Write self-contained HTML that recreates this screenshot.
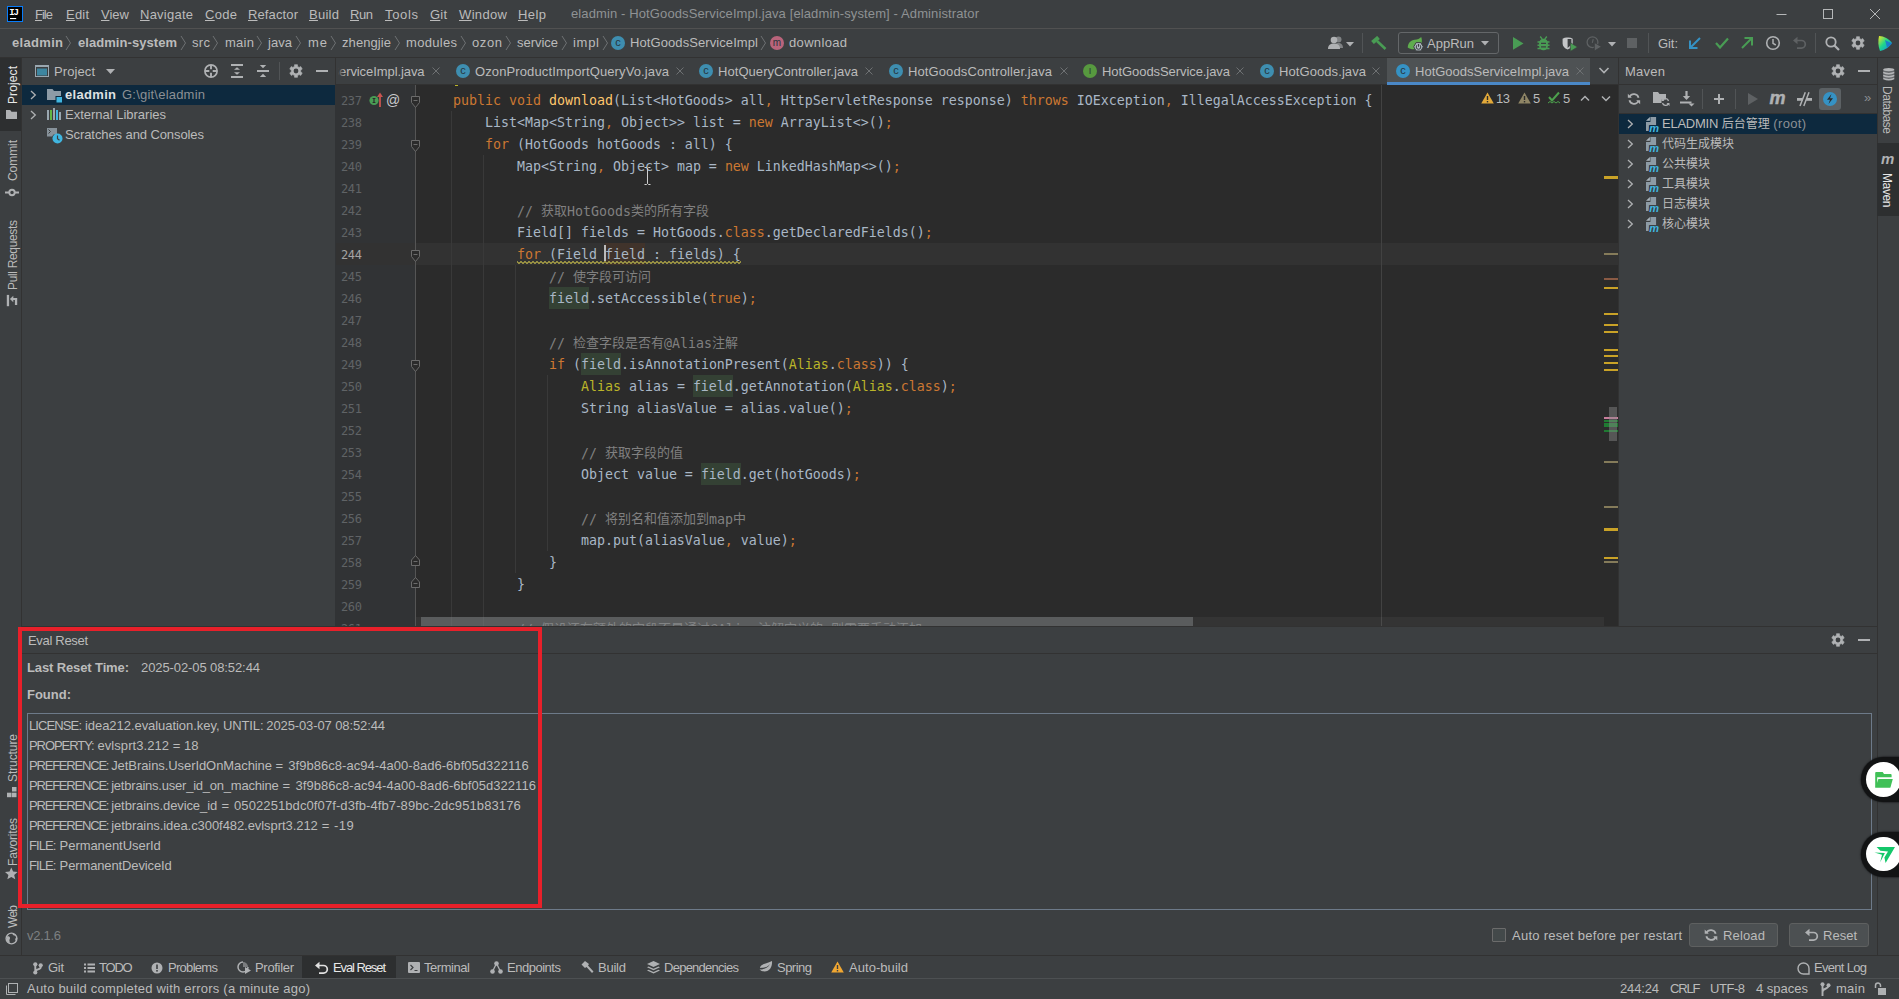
<!DOCTYPE html>
<html lang="en"><head><meta charset="utf-8"><title>eladmin - HotGoodsServiceImpl.java</title>
<style>
html,body{margin:0;padding:0;background:#3c3f41;}
body{width:1899px;height:999px;overflow:hidden;}
#root{position:relative;width:1899px;height:999px;overflow:hidden;background:#3c3f41;font-family:"Liberation Sans","Noto Sans CJK SC",sans-serif;font-size:13px;color:#bbbbbb;}
#root div,#root svg,#root span.t{position:absolute;}
span.t{white-space:pre;display:block;}
.b{font-weight:bold;}
.dim{color:#8a8d8f;}
.mono{font-family:"DejaVu Sans Mono","Noto Sans CJK SC",monospace;}
.code{font-family:"DejaVu Sans Mono","Noto Sans CJK SC",monospace;font-size:13.29px;color:#a9b7c6;}
.code i{font-style:normal;font-family:"Noto Sans CJK SC",sans-serif;font-size:13px;position:relative;top:-1px;}
.k{color:#cc7832;}.m{color:#ffc66d;}.c{color:#808080;}.a{color:#bbb529;}
.hr{background:#344134;padding:4px 0 3px;}.hw{background:#40332b;padding:4px 0 3px;}
.wv{}
.ln{font-family:"DejaVu Sans Mono",monospace;font-size:12px;color:#606366;letter-spacing:-0.4px;}
.vl{transform-origin:0 0;transform:rotate(-90deg);font-size:12px;}
.vr{transform-origin:0 0;transform:rotate(90deg);font-size:12px;}
.mv i{font-style:normal;font-size:12px;}
.mv em{font-style:normal;color:#8c9094;letter-spacing:.35px;}

</style></head><body>
<div id="root">
<div style="left:0px;top:0px;width:1899px;height:28px;background:#3c3f41;"></div>
<div style="left:0px;top:28px;width:1899px;height:1px;background:#515151;"></div>
<div style="left:0px;top:29px;width:1899px;height:28px;background:#3c3f41;"></div>
<div style="left:0px;top:57px;width:1899px;height:1px;background:#323232;"></div>
<div style="left:0px;top:58px;width:22px;height:898px;background:#3c3f41;"></div>
<div style="left:21px;top:58px;width:1px;height:898px;background:#323232;"></div>
<div style="left:0px;top:58px;width:21px;height:73px;background:#2d2f30;"></div>
<div style="left:22px;top:58px;width:313px;height:569px;background:#3c3f41;"></div>
<div style="left:22px;top:85px;width:313px;height:20px;background:#0d293e;"></div>
<div style="left:335px;top:58px;width:1284px;height:27px;background:#3c3f41;"></div>
<div style="left:335px;top:84px;width:1284px;height:1px;background:#323232;"></div>
<div style="left:335px;top:85px;width:1284px;height:541px;background:#2b2b2b;"></div>
<div style="left:335px;top:85px;width:80px;height:541px;background:#313335;"></div>
<div style="left:1618px;top:58px;width:1px;height:569px;background:#323232;"></div>
<div style="left:1619px;top:58px;width:258px;height:569px;background:#3c3f41;"></div>
<div style="left:1619px;top:84px;width:258px;height:1px;background:#323232;"></div>
<div style="left:1619px;top:114px;width:258px;height:20px;background:#0d293e;"></div>
<div style="left:1877px;top:58px;width:1px;height:898px;background:#323232;"></div>
<div style="left:1878px;top:58px;width:21px;height:898px;background:#3c3f41;"></div>
<div style="left:1877px;top:143px;width:22px;height:73px;background:#2d2f30;"></div>
<div style="left:22px;top:626px;width:1855px;height:1px;background:#323232;"></div>
<div style="left:22px;top:627px;width:1855px;height:329px;background:#3c3f41;"></div>
<div style="left:22px;top:653px;width:1855px;height:1px;background:#323232;"></div>
<div style="left:0px;top:955px;width:1899px;height:1px;background:#323232;"></div>
<div style="left:0px;top:956px;width:1899px;height:22px;background:#3c3f41;"></div>
<div style="left:0px;top:978px;width:1899px;height:1px;background:#4d5052;"></div>
<div style="left:0px;top:979px;width:1899px;height:20px;background:#3c3f41;"></div>
<svg style="left:7px;top:6px;" width="16" height="16" viewBox="0 0 16 16"><rect x="0.5" y="0.5" width="15" height="15" fill="#000" stroke="#087cfa" stroke-width="1"/><text x="2.200" y="8.900" font-family="Liberation Mono,monospace" font-weight="bold" font-size="9" letter-spacing="-1" fill="#fff">IJ</text><rect x="3" y="12" width="6.200" height="1.100" fill="#fff"/></svg>
<span class="t " style="left:35px;top:5.0px;line-height:20px;letter-spacing:-0.990px;text-underline-offset:1px;"><u>F</u>ile</span>
<span class="t " style="left:66px;top:5.0px;line-height:20px;letter-spacing:0.198px;text-underline-offset:1px;"><u>E</u>dit</span>
<span class="t " style="left:101px;top:5.0px;line-height:20px;letter-spacing:0.016px;text-underline-offset:1px;"><u>V</u>iew</span>
<span class="t " style="left:140px;top:5.0px;line-height:20px;letter-spacing:0.241px;text-underline-offset:1px;"><u>N</u>avigate</span>
<span class="t " style="left:205px;top:5.0px;line-height:20px;letter-spacing:0.302px;text-underline-offset:1px;"><u>C</u>ode</span>
<span class="t " style="left:248px;top:5.0px;line-height:20px;letter-spacing:0.123px;text-underline-offset:1px;"><u>R</u>efactor</span>
<span class="t " style="left:309px;top:5.0px;line-height:20px;letter-spacing:0.270px;text-underline-offset:1px;"><u>B</u>uild</span>
<span class="t " style="left:350px;top:5.0px;line-height:20px;letter-spacing:-0.430px;text-underline-offset:1px;"><u>R</u>un</span>
<span class="t " style="left:385px;top:5.0px;line-height:20px;letter-spacing:0.660px;text-underline-offset:1px;"><u>T</u>ools</span>
<span class="t " style="left:430px;top:5.0px;line-height:20px;letter-spacing:0.188px;text-underline-offset:1px;"><u>G</u>it</span>
<span class="t " style="left:459px;top:5.0px;line-height:20px;letter-spacing:0.350px;text-underline-offset:1px;"><u>W</u>indow</span>
<span class="t " style="left:518px;top:5.0px;line-height:20px;letter-spacing:0.417px;text-underline-offset:1px;"><u>H</u>elp</span>
<span class="t " style="left:571px;top:4.0px;line-height:20px;letter-spacing:0.117px;color:#8f9294;">eladmin - HotGoodsServiceImpl.java [eladmin-system] - Administrator</span>
<svg style="left:1776px;top:8px;" width="12" height="12" viewBox="0 0 12 12"><path d="M0.5 6.5h10" stroke="#b5b7b8" stroke-width="1" fill="none"/></svg>
<svg style="left:1822px;top:8px;" width="12" height="12" viewBox="0 0 12 12"><rect x="1.5" y="1.5" width="9" height="9" stroke="#b5b7b8" stroke-width="1" fill="none"/></svg>
<svg style="left:1869px;top:8px;" width="12" height="12" viewBox="0 0 12 12"><path d="M1 1l10 10M11 1L1 11" stroke="#b5b7b8" stroke-width="1" fill="none"/></svg>
<span class="t b" style="left:12px;top:33.0px;line-height:20px;letter-spacing:0.312px;">eladmin</span>
<span class="t b" style="left:78px;top:33.0px;line-height:20px;letter-spacing:0.056px;">eladmin-system</span>
<span class="t " style="left:192px;top:33.0px;line-height:20px;letter-spacing:0.328px;">src</span>
<span class="t " style="left:225px;top:33.0px;line-height:20px;letter-spacing:0.271px;">main</span>
<span class="t " style="left:268px;top:33.0px;line-height:20px;letter-spacing:0.047px;">java</span>
<span class="t " style="left:308px;top:33.0px;line-height:20px;letter-spacing:0.938px;">me</span>
<span class="t " style="left:342px;top:33.0px;line-height:20px;letter-spacing:0.080px;">zhengjie</span>
<span class="t " style="left:406px;top:33.0px;line-height:20px;letter-spacing:0.310px;">modules</span>
<span class="t " style="left:472px;top:33.0px;line-height:20px;letter-spacing:0.599px;">ozon</span>
<span class="t " style="left:517px;top:33.0px;line-height:20px;letter-spacing:-0.031px;">service</span>
<span class="t " style="left:573px;top:33.0px;line-height:20px;letter-spacing:0.719px;">impl</span>
<svg style="left:64.5px;top:35px;" width="7" height="16" viewBox="0 0 7 16"><path d="M1 1l4.5 7L1 15" stroke="#6e7173" stroke-width="1" fill="none"/></svg>
<svg style="left:179.5px;top:35px;" width="7" height="16" viewBox="0 0 7 16"><path d="M1 1l4.5 7L1 15" stroke="#6e7173" stroke-width="1" fill="none"/></svg>
<svg style="left:211.5px;top:35px;" width="7" height="16" viewBox="0 0 7 16"><path d="M1 1l4.5 7L1 15" stroke="#6e7173" stroke-width="1" fill="none"/></svg>
<svg style="left:255.5px;top:35px;" width="7" height="16" viewBox="0 0 7 16"><path d="M1 1l4.5 7L1 15" stroke="#6e7173" stroke-width="1" fill="none"/></svg>
<svg style="left:294.5px;top:35px;" width="7" height="16" viewBox="0 0 7 16"><path d="M1 1l4.5 7L1 15" stroke="#6e7173" stroke-width="1" fill="none"/></svg>
<svg style="left:329.5px;top:35px;" width="7" height="16" viewBox="0 0 7 16"><path d="M1 1l4.5 7L1 15" stroke="#6e7173" stroke-width="1" fill="none"/></svg>
<svg style="left:393.5px;top:35px;" width="7" height="16" viewBox="0 0 7 16"><path d="M1 1l4.5 7L1 15" stroke="#6e7173" stroke-width="1" fill="none"/></svg>
<svg style="left:459.5px;top:35px;" width="7" height="16" viewBox="0 0 7 16"><path d="M1 1l4.5 7L1 15" stroke="#6e7173" stroke-width="1" fill="none"/></svg>
<svg style="left:504.5px;top:35px;" width="7" height="16" viewBox="0 0 7 16"><path d="M1 1l4.5 7L1 15" stroke="#6e7173" stroke-width="1" fill="none"/></svg>
<svg style="left:560.5px;top:35px;" width="7" height="16" viewBox="0 0 7 16"><path d="M1 1l4.5 7L1 15" stroke="#6e7173" stroke-width="1" fill="none"/></svg>
<svg style="left:601.5px;top:35px;" width="7" height="16" viewBox="0 0 7 16"><path d="M1 1l4.5 7L1 15" stroke="#6e7173" stroke-width="1" fill="none"/></svg>
<svg style="left:759.5px;top:35px;" width="7" height="16" viewBox="0 0 7 16"><path d="M1 1l4.5 7L1 15" stroke="#6e7173" stroke-width="1" fill="none"/></svg>
<svg style="left:610px;top:35px;" width="16" height="16" viewBox="0 0 16 16"><circle cx="8" cy="8" r="7" fill="#3e8eb0"/><text x="8" y="10.9" text-anchor="middle" font-family="Liberation Sans,sans-serif" font-size="11" fill="#28343c">c</text></svg>
<span class="t " style="left:630px;top:33.0px;line-height:20px;letter-spacing:0.086px;">HotGoodsServiceImpl</span>
<svg style="left:769px;top:35px;" width="16" height="16" viewBox="0 0 16 16"><circle cx="8" cy="8" r="7" fill="#b9647b"/><text x="8" y="11.2" text-anchor="middle" font-family="Liberation Sans,sans-serif" font-size="10" fill="#28343c">m</text></svg>
<span class="t " style="left:789px;top:33.0px;line-height:20px;letter-spacing:0.335px;">download</span>
<span class="t vl" style="left:4.5px;top:104px;line-height:16px;font-size:12px;color:#e8e8e8;letter-spacing:0.107px;">Project</span>
<svg style="left:6px;top:110px;" width="11" height="9" viewBox="0 0 11 9"><path d="M0 0h4.200l1.300 1.800H11V9H0z" fill="#afb1b3"/></svg>
<span class="t vl" style="left:4.5px;top:181px;line-height:16px;font-size:12px;color:#bbbbbb;letter-spacing:-0.069px;">Commit</span>
<svg style="left:5px;top:186.5px;" width="14" height="11" viewBox="0 0 14 11"><circle cx="7" cy="5.500" r="2.700" stroke="#afb1b3" stroke-width="1.900" fill="none"/><path d="M0 5.500h4.300M9.700 5.500H14" stroke="#afb1b3" stroke-width="1.900"/></svg>
<span class="t vl" style="left:4.5px;top:289.5px;line-height:16px;font-size:12px;color:#bbbbbb;letter-spacing:-0.337px;">Pull Requests</span>
<svg style="left:6px;top:294px;" width="12" height="13" viewBox="0 0 12 13"><rect x=".8" y=".9" width="2.300" height="11.300" fill="#afb1b3"/><path d="M3.900 5L7.300 1.800v6.500z" fill="#afb1b3"/><path d="M7 4h4.200v7.100H8.900V6.100H7z" fill="#afb1b3"/></svg>
<span class="t vl" style="left:4.5px;top:782px;line-height:16px;font-size:12px;color:#bbbbbb;letter-spacing:-0.086px;">Structure</span>
<svg style="left:7px;top:787px;" width="10" height="11" viewBox="0 0 10 11"><rect x="5" y="0" width="4.500" height="4.500" fill="#afb1b3"/><rect x="0" y="5.700" width="4.500" height="4.500" fill="#afb1b3"/><rect x="5" y="5.700" width="4.500" height="4.500" fill="#afb1b3"/></svg>
<span class="t vl" style="left:4.5px;top:866px;line-height:16px;font-size:12px;color:#bbbbbb;letter-spacing:-0.170px;">Favorites</span>
<svg style="left:5px;top:866.5px;" width="13" height="13" viewBox="0 0 13 13"><path transform="scale(.9)" d="M7 0.5l2 4.6 5 .4-3.8 3.3 1.2 4.9L7 11.1 2.6 13.7l1.2-4.9L0 5.5l5-.4z" fill="#afb1b3"/></svg>
<span class="t vl" style="left:4.5px;top:928px;line-height:16px;font-size:12px;color:#bbbbbb;letter-spacing:-0.734px;">Web</span>
<svg style="left:5px;top:932px;" width="13" height="13" viewBox="0 0 13 13"><circle cx="6.500" cy="6.500" r="5.400" fill="none" stroke="#afb1b3" stroke-width="1.400"/><path d="M2 4.500c1.500-.5 3 0 3 1.500s-1 1.500-.5 3 0 2-.5 2C2 10 1 7 2 4.500zM7.500 1.500c0 1.500 1 2 2.500 2s1.500 2 .5 3 .5 2 .5 3c2-2 2-6-3.500-8z" fill="#afb1b3"/></svg>
<svg style="left:1882.5px;top:68px;" width="12" height="13" viewBox="0 0 12 13"><path d="M.2 1.600h11.100v8.500Q5.750 13 .2 10.100z" fill="#686b6e"/><ellipse cx="5.750" cy="1.600" rx="5.550" ry="1.600" fill="#b4b6b8"/><path d="M.2 3.8Q5.750 6.0 11.300 3.8v1.500Q5.750 7.7 .2 5.3z" fill="#b4b6b8"/><path d="M.2 6.8Q5.750 9.0 11.300 6.8v1.500Q5.750 10.7 .2 8.3z" fill="#b4b6b8"/><path d="M.2 9.8Q5.750 12.0 11.300 9.8v1.500Q5.750 13.7 .2 11.3z" fill="#b4b6b8"/></svg>
<span class="t vr" style="left:1895px;top:85.5px;line-height:16px;font-size:12px;color:#bbbbbb;letter-spacing:-0.482px;">Database</span>
<svg style="left:1881px;top:154px;" width="14" height="11" viewBox="0 0 14 11"><text x="0" y="10" font-family="Liberation Sans,sans-serif" font-style="italic" font-weight="bold" font-size="15" fill="#afb1b3">m</text></svg>
<span class="t vr" style="left:1895px;top:172.5px;line-height:16px;font-size:12px;color:#e8e8e8;letter-spacing:-0.383px;">Maven</span>
<svg style="left:35px;top:65px;" width="14" height="12" viewBox="0 0 14 12"><rect x="0.5" y="0.5" width="13" height="11" fill="none" stroke="#9aa7b0" stroke-width="1"/><rect x="0" y="0" width="14" height="2" fill="#9aa7b0"/><rect x="2" y="3.500" width="10" height="7" fill="#3e86a0"/></svg>
<span class="t " style="left:54px;top:62.0px;line-height:20px;letter-spacing:0.089px;">Project</span>
<svg style="left:106px;top:69px;" width="10" height="6" viewBox="0 0 10 6"><path d="M0 0h9L4.500 5z" fill="#afb1b3"/></svg>
<svg style="left:203px;top:63px;" width="16" height="16" viewBox="0 0 16 16"><circle cx="8" cy="8" r="6.100" fill="none" stroke="#afb1b3" stroke-width="1.700"/><path d="M8 2v4.300M8 9.700V14M2 8h4.300M9.700 8H14" stroke="#afb1b3" stroke-width="1.900"/></svg>
<svg style="left:229px;top:63px;" width="16" height="16" viewBox="0 0 16 16"><path d="M2 2h12M2 14h12" stroke="#afb1b3" stroke-width="2"/><path d="M8 4.200l3 2.600H5zM8 11.800l3-2.600H5z" fill="#afb1b3"/></svg>
<svg style="left:255px;top:63px;" width="16" height="16" viewBox="0 0 16 16"><path d="M2 8h12" stroke="#afb1b3" stroke-width="2"/><path d="M8 5.300L11.200 2H4.800zM8 10.700l3.200 3.300H4.800z" fill="#afb1b3"/></svg>
<div style="left:279px;top:62px;width:1px;height:18px;background:#515456;"></div>
<svg style="left:288px;top:63px;" width="16" height="16" viewBox="0 0 16 16"><path fill="#afb1b3" fill-rule="evenodd" d="M6.44 3.46L6.54 1.67L9.46 1.67L9.56 3.46L11.15 4.38L12.75 3.57L14.22 6.10L12.71 7.08L12.71 8.92L14.22 9.90L12.75 12.43L11.15 11.62L9.56 12.54L9.46 14.33L6.54 14.33L6.44 12.54L4.85 11.62L3.25 12.43L1.78 9.90L3.29 8.92L3.29 7.08L1.78 6.10L3.25 3.57L4.85 4.38zM5.60 8a2.4 2.4 0 1 0 4.8 0a2.4 2.4 0 1 0 -4.8 0z"/><path fill="none" stroke="#afb1b3" stroke-width=".6" stroke-linejoin="round" d="M6.44 3.46L6.54 1.67L9.46 1.67L9.56 3.46L11.15 4.38L12.75 3.57L14.22 6.10L12.71 7.08L12.71 8.92L14.22 9.90L12.75 12.43L11.15 11.62L9.56 12.54L9.46 14.33L6.54 14.33L6.44 12.54L4.85 11.62L3.25 12.43L1.78 9.90L3.29 8.92L3.29 7.08L1.78 6.10L3.25 3.57L4.85 4.38z"/></svg>
<div style="left:316px;top:70px;width:12px;height:2px;background:#afb1b3;"></div>
<svg style="left:30px;top:90px;" width="7" height="10" viewBox="0 0 7 10"><path d="M1 1l4.300 4L1 9" stroke="#afb1b3" stroke-width="1.300" fill="none"/></svg>
<svg style="left:30px;top:110px;" width="7" height="10" viewBox="0 0 7 10"><path d="M1 1l4.300 4L1 9" stroke="#afb1b3" stroke-width="1.300" fill="none"/></svg>
<svg style="left:47px;top:88px;" width="16" height="15" viewBox="0 0 16 15"><path d="M0 1h5.500l1.500 2H14v9H0z" fill="#8d9ba6"/><rect x="8.500" y="8" width="6.500" height="6.500" fill="#0d293e"/><rect x="9.500" y="9" width="5.500" height="5.500" fill="#40b6e0"/></svg>
<span class="t b" style="left:65px;top:85.0px;line-height:20px;letter-spacing:0.312px;color:#dfe1e3;">eladmin</span>
<span class="t " style="left:122px;top:85.0px;line-height:20px;letter-spacing:0.215px;color:#8c9094;">G:\git\eladmin</span>
<svg style="left:47px;top:108px;" width="14" height="13" viewBox="0 0 14 13"><rect x="0" y="2" width="2" height="10" fill="#9aa7b0"/><rect x="3" y="2" width="2" height="10" fill="#62b543"/><rect x="6" y="0" width="2" height="12" fill="#9aa7b0"/><rect x="9" y="2" width="2" height="10" fill="#40b6e0"/><rect x="12" y="4" width="2" height="8" fill="#9aa7b0"/></svg>
<span class="t " style="left:65px;top:105.0px;line-height:20px;letter-spacing:-0.009px;">External Libraries</span>
<svg style="left:47px;top:128px;" width="16" height="16" viewBox="0 0 16 16"><path d="M0 0h10v6.500H6.500L5 8.500H0z" fill="#9aa7b0" opacity=".8"/><path d="M1.500 1.500l2 2-2 2" stroke="#3c3f41" stroke-width="1" fill="none"/><circle cx="10.500" cy="10.500" r="5" fill="#40b6e0"/><path d="M10.500 7.500v3.200l2 1.500" stroke="#3c3f41" stroke-width="1.200" fill="none"/></svg>
<span class="t " style="left:65px;top:125.0px;line-height:20px;letter-spacing:-0.092px;">Scratches and Consoles</span>
<div style="left:335px;top:58px;width:1px;height:27px;background:#323232;"></div>
<div style="left:1387px;top:58px;width:203px;height:26px;background:#4e5254;"></div>
<div style="left:1387px;top:82px;width:203px;height:3px;background:#4a88c7;"></div>
<div style="left:336px;top:58px;width:100px;height:26px;overflow:hidden;"><span class="t" style="left:-5.600px;top:4px;line-height:20px;letter-spacing:-0.080px;">ServiceImpl.java</span></div>
<div style="left:336px;top:58px;width:9px;height:26px;background:linear-gradient(90deg,#3c3f41 20%,rgba(60,63,65,0));"></div>
<svg style="left:432px;top:67px;" width="8" height="8" viewBox="0 0 8 8"><path d="M.5.5l7 7M7.500.5l-7 7" stroke="#6e7173" stroke-width="1" fill="none"/></svg>
<svg style="left:455px;top:63px;" width="16" height="16" viewBox="0 0 16 16"><circle cx="8" cy="8" r="7" fill="#3e8eb0"/><text x="8" y="10.9" text-anchor="middle" font-family="Liberation Sans,sans-serif" font-size="11" fill="#28343c">c</text></svg>
<span class="t " style="left:475px;top:62.0px;line-height:20px;letter-spacing:0.116px;">OzonProductImportQueryVo.java</span>
<svg style="left:676px;top:67px;" width="8" height="8" viewBox="0 0 8 8"><path d="M.5.5l7 7M7.500.5l-7 7" stroke="#6e7173" stroke-width="1" fill="none"/></svg>
<svg style="left:698px;top:63px;" width="16" height="16" viewBox="0 0 16 16"><circle cx="8" cy="8" r="7" fill="#3e8eb0"/><text x="8" y="10.9" text-anchor="middle" font-family="Liberation Sans,sans-serif" font-size="11" fill="#28343c">c</text></svg>
<span class="t " style="left:718px;top:62.0px;line-height:20px;letter-spacing:0.058px;">HotQueryController.java</span>
<svg style="left:865px;top:67px;" width="8" height="8" viewBox="0 0 8 8"><path d="M.5.5l7 7M7.500.5l-7 7" stroke="#6e7173" stroke-width="1" fill="none"/></svg>
<svg style="left:888px;top:63px;" width="16" height="16" viewBox="0 0 16 16"><circle cx="8" cy="8" r="7" fill="#3e8eb0"/><text x="8" y="10.9" text-anchor="middle" font-family="Liberation Sans,sans-serif" font-size="11" fill="#28343c">c</text></svg>
<span class="t " style="left:908px;top:62.0px;line-height:20px;letter-spacing:0.107px;">HotGoodsController.java</span>
<svg style="left:1060px;top:67px;" width="8" height="8" viewBox="0 0 8 8"><path d="M.5.5l7 7M7.500.5l-7 7" stroke="#6e7173" stroke-width="1" fill="none"/></svg>
<svg style="left:1082px;top:63px;" width="16" height="16" viewBox="0 0 16 16"><circle cx="8" cy="8" r="7" fill="#57993f"/><text x="8" y="11.2" text-anchor="middle" font-family="Liberation Sans,sans-serif" font-size="9" fill="#28343c">I</text></svg>
<span class="t " style="left:1102px;top:62.0px;line-height:20px;letter-spacing:-0.071px;">HotGoodsService.java</span>
<svg style="left:1236px;top:67px;" width="8" height="8" viewBox="0 0 8 8"><path d="M.5.5l7 7M7.500.5l-7 7" stroke="#6e7173" stroke-width="1" fill="none"/></svg>
<svg style="left:1259px;top:63px;" width="16" height="16" viewBox="0 0 16 16"><circle cx="8" cy="8" r="7" fill="#3e8eb0"/><text x="8" y="10.9" text-anchor="middle" font-family="Liberation Sans,sans-serif" font-size="11" fill="#28343c">c</text></svg>
<span class="t " style="left:1279px;top:62.0px;line-height:20px;letter-spacing:0.083px;">HotGoods.java</span>
<svg style="left:1372px;top:67px;" width="8" height="8" viewBox="0 0 8 8"><path d="M.5.5l7 7M7.500.5l-7 7" stroke="#6e7173" stroke-width="1" fill="none"/></svg>
<svg style="left:1395px;top:63px;" width="16" height="16" viewBox="0 0 16 16"><circle cx="8" cy="8" r="7" fill="#3592c4"/><text x="8" y="10.9" text-anchor="middle" font-family="Liberation Sans,sans-serif" font-size="11" fill="#28343c">c</text></svg>
<span class="t " style="left:1415px;top:62.0px;line-height:20px;letter-spacing:0.004px;">HotGoodsServiceImpl.java</span>
<svg style="left:1576px;top:67px;" width="8" height="8" viewBox="0 0 8 8"><path d="M.5.5l7 7M7.500.5l-7 7" stroke="#6e7173" stroke-width="1" fill="none"/></svg>
<svg style="left:1598px;top:66px;" width="12" height="10" viewBox="0 0 12 10"><path d="M1.500 2l4.500 4.500L10.500 2" stroke="#afb1b3" stroke-width="1.600" fill="none"/></svg>
<div style="left:336px;top:243px;width:1283px;height:22px;background:#323232;"></div>
<div style="left:415px;top:85px;width:1px;height:541px;background:#555555;"></div>
<div style="left:1381px;top:85px;width:1px;height:541px;background:#424242;"></div>
<div style="left:451px;top:111px;width:1px;height:515px;background:#393939;"></div>
<div style="left:483px;top:155px;width:1px;height:471px;background:#393939;"></div>
<div style="left:515px;top:265px;width:1px;height:308px;background:#393939;"></div>
<div style="left:547px;top:375px;width:1px;height:176px;background:#393939;"></div>
<div style="left:336px;top:85px;width:1268px;height:541px;overflow:hidden;">
<span class="t ln" style="left:5px;top:5px;line-height:22px;color:#606366;">237</span>
<span class="t code" style="left:85px;top:5px;line-height:22px;height:22px;">    <span class="k">public void </span><span class="m">download</span>(List&lt;HotGoods&gt; all<span class="k">,</span> HttpServletResponse response) <span class="k">throws </span>IOException<span class="k">,</span> IllegalAccessException {</span>
<span class="t ln" style="left:5px;top:27px;line-height:22px;color:#606366;">238</span>
<span class="t code" style="left:85px;top:27px;line-height:22px;height:22px;">        List&lt;Map&lt;String<span class="k">,</span> Object&gt;&gt; list = <span class="k">new </span>ArrayList&lt;&gt;()<span class="k">;</span></span>
<span class="t ln" style="left:5px;top:49px;line-height:22px;color:#606366;">239</span>
<span class="t code" style="left:85px;top:49px;line-height:22px;height:22px;">        <span class="k">for </span>(HotGoods hotGoods : all) {</span>
<span class="t ln" style="left:5px;top:71px;line-height:22px;color:#606366;">240</span>
<span class="t code" style="left:85px;top:71px;line-height:22px;height:22px;">            Map&lt;String<span class="k">,</span> Object&gt; map = <span class="k">new </span>LinkedHashMap&lt;&gt;()<span class="k">;</span></span>
<span class="t ln" style="left:5px;top:93px;line-height:22px;color:#606366;">241</span>
<span class="t ln" style="left:5px;top:115px;line-height:22px;color:#606366;">242</span>
<span class="t code" style="left:85px;top:115px;line-height:22px;height:22px;">            <span class="c">// <i>获取</i>HotGoods<i>类的所有字段</i></span></span>
<span class="t ln" style="left:5px;top:137px;line-height:22px;color:#606366;">243</span>
<span class="t code" style="left:85px;top:137px;line-height:22px;height:22px;">            Field[] fields = HotGoods.<span class="k">class</span>.getDeclaredFields()<span class="k">;</span></span>
<span class="t ln" style="left:5px;top:159px;line-height:22px;color:#a4a3a3;">244</span>
<span class="t code" style="left:85px;top:159px;line-height:22px;height:22px;">            <span class="wv"><span class="k">for </span>(Field <span class="hw">field</span> : fields) {</span></span>
<span class="t ln" style="left:5px;top:181px;line-height:22px;color:#606366;">245</span>
<span class="t code" style="left:85px;top:181px;line-height:22px;height:22px;">                <span class="c">// <i>使字段可访问</i></span></span>
<span class="t ln" style="left:5px;top:203px;line-height:22px;color:#606366;">246</span>
<span class="t code" style="left:85px;top:203px;line-height:22px;height:22px;">                <span class="hr">field</span>.setAccessible(<span class="k">true</span>)<span class="k">;</span></span>
<span class="t ln" style="left:5px;top:225px;line-height:22px;color:#606366;">247</span>
<span class="t ln" style="left:5px;top:247px;line-height:22px;color:#606366;">248</span>
<span class="t code" style="left:85px;top:247px;line-height:22px;height:22px;">                <span class="c">// <i>检查字段是否有</i>@Alias<i>注解</i></span></span>
<span class="t ln" style="left:5px;top:269px;line-height:22px;color:#606366;">249</span>
<span class="t code" style="left:85px;top:269px;line-height:22px;height:22px;">                <span class="k">if </span>(<span class="hr">field</span>.isAnnotationPresent(<span class="a">Alias</span>.<span class="k">class</span>)) {</span>
<span class="t ln" style="left:5px;top:291px;line-height:22px;color:#606366;">250</span>
<span class="t code" style="left:85px;top:291px;line-height:22px;height:22px;">                    <span class="a">Alias</span> alias = <span class="hr">field</span>.getAnnotation(<span class="a">Alias</span>.<span class="k">class</span>)<span class="k">;</span></span>
<span class="t ln" style="left:5px;top:313px;line-height:22px;color:#606366;">251</span>
<span class="t code" style="left:85px;top:313px;line-height:22px;height:22px;">                    String aliasValue = alias.value()<span class="k">;</span></span>
<span class="t ln" style="left:5px;top:335px;line-height:22px;color:#606366;">252</span>
<span class="t ln" style="left:5px;top:357px;line-height:22px;color:#606366;">253</span>
<span class="t code" style="left:85px;top:357px;line-height:22px;height:22px;">                    <span class="c">// <i>获取字段的值</i></span></span>
<span class="t ln" style="left:5px;top:379px;line-height:22px;color:#606366;">254</span>
<span class="t code" style="left:85px;top:379px;line-height:22px;height:22px;">                    Object value = <span class="hr">field</span>.get(hotGoods)<span class="k">;</span></span>
<span class="t ln" style="left:5px;top:401px;line-height:22px;color:#606366;">255</span>
<span class="t ln" style="left:5px;top:423px;line-height:22px;color:#606366;">256</span>
<span class="t code" style="left:85px;top:423px;line-height:22px;height:22px;">                    <span class="c">// <i>将别名和值添加到</i>map<i>中</i></span></span>
<span class="t ln" style="left:5px;top:445px;line-height:22px;color:#606366;">257</span>
<span class="t code" style="left:85px;top:445px;line-height:22px;height:22px;">                    map.put(aliasValue<span class="k">,</span> value)<span class="k">;</span></span>
<span class="t ln" style="left:5px;top:467px;line-height:22px;color:#606366;">258</span>
<span class="t code" style="left:85px;top:467px;line-height:22px;height:22px;">                }</span>
<span class="t ln" style="left:5px;top:489px;line-height:22px;color:#606366;">259</span>
<span class="t code" style="left:85px;top:489px;line-height:22px;height:22px;">            }</span>
<span class="t ln" style="left:5px;top:511px;line-height:22px;color:#606366;">260</span>
<span class="t ln" style="left:5px;top:533px;line-height:22px;color:#606366;">261</span>
<span class="t code" style="left:85px;top:533px;line-height:22px;height:22px;">            <span class="c">// <i>假设还有额外的字段不是通过</i>@Alias<i>注解定义的</i>,<i>则需要手动添加</i></span></span>
</div>
<div style="left:604px;top:245px;width:2px;height:18px;background:#bbbbbb;"></div>
<svg style="left:517px;top:261px;" width="225" height="3" viewBox="0 0 225 3"><path d="M0 0.5L2 2.5L4 0.5L6 2.5L8 0.5L10 2.5L12 0.5L14 2.5L16 0.5L18 2.5L20 0.5L22 2.5L24 0.5L26 2.5L28 0.5L30 2.5L32 0.5L34 2.5L36 0.5L38 2.5L40 0.5L42 2.5L44 0.5L46 2.5L48 0.5L50 2.5L52 0.5L54 2.5L56 0.5L58 2.5L60 0.5L62 2.5L64 0.5L66 2.5L68 0.5L70 2.5L72 0.5L74 2.5L76 0.5L78 2.5L80 0.5L82 2.5L84 0.5L86 2.5L88 0.5L90 2.5L92 0.5L94 2.5L96 0.5L98 2.5L100 0.5L102 2.5L104 0.5L106 2.5L108 0.5L110 2.5L112 0.5L114 2.5L116 0.5L118 2.5L120 0.5L122 2.5L124 0.5L126 2.5L128 0.5L130 2.5L132 0.5L134 2.5L136 0.5L138 2.5L140 0.5L142 2.5L144 0.5L146 2.5L148 0.5L150 2.5L152 0.5L154 2.5L156 0.5L158 2.5L160 0.5L162 2.5L164 0.5L166 2.5L168 0.5L170 2.5L172 0.5L174 2.5L176 0.5L178 2.5L180 0.5L182 2.5L184 0.5L186 2.5L188 0.5L190 2.5L192 0.5L194 2.5L196 0.5L198 2.5L200 0.5L202 2.5L204 0.5L206 2.5L208 0.5L210 2.5L212 0.5L214 2.5L216 0.5L218 2.5L220 0.5L222 2.5L224 0.5" stroke="#948d42" stroke-width="1" fill="none" shape-rendering="crispEdges"/></svg>
<svg style="left:411px;top:96px;" width="9" height="12" viewBox="0 0 9 12"><path d="M.5.5h8v6l-4 5-4-5z" fill="#2b2b2b" stroke="#6b6b6b" stroke-width="1"/><path d="M2.500 4.500h4" stroke="#6b6b6b" stroke-width="1"/></svg>
<svg style="left:411px;top:140px;" width="9" height="12" viewBox="0 0 9 12"><path d="M.5.5h8v6l-4 5-4-5z" fill="#2b2b2b" stroke="#6b6b6b" stroke-width="1"/><path d="M2.500 4.500h4" stroke="#6b6b6b" stroke-width="1"/></svg>
<svg style="left:411px;top:250px;" width="9" height="12" viewBox="0 0 9 12"><path d="M.5.5h8v6l-4 5-4-5z" fill="#2b2b2b" stroke="#6b6b6b" stroke-width="1"/><path d="M2.500 4.500h4" stroke="#6b6b6b" stroke-width="1"/></svg>
<svg style="left:411px;top:360px;" width="9" height="12" viewBox="0 0 9 12"><path d="M.5.5h8v6l-4 5-4-5z" fill="#2b2b2b" stroke="#6b6b6b" stroke-width="1"/><path d="M2.500 4.500h4" stroke="#6b6b6b" stroke-width="1"/></svg>
<svg style="left:411px;top:555px;" width="9" height="11" viewBox="0 0 9 11"><path d="M.5 10.500h8V5L4.500.5.5 5z" fill="#2b2b2b" stroke="#6b6b6b" stroke-width="1"/><path d="M2.500 6.500h4" stroke="#6b6b6b" stroke-width="1"/></svg>
<svg style="left:411px;top:577px;" width="9" height="11" viewBox="0 0 9 11"><path d="M.5 10.500h8V5L4.500.5.5 5z" fill="#2b2b2b" stroke="#6b6b6b" stroke-width="1"/><path d="M2.500 6.500h4" stroke="#6b6b6b" stroke-width="1"/></svg>
<svg style="left:369px;top:92px;" width="15" height="15" viewBox="0 0 15 15"><circle cx="5" cy="8.500" r="4.600" fill="#499c54"/><rect x="4.400" y="6" width="1.200" height="5" fill="#2b2b2b"/><rect x="3.600" y="6" width="2.800" height="1" fill="#2b2b2b"/><rect x="3.600" y="10" width="2.800" height="1" fill="#2b2b2b"/><path d="M11 15V4" stroke="#c75450" stroke-width="1.800"/><path d="M8 5l3-4.500L14 5z" fill="#c75450"/></svg>
<span class="t " style="left:386px;top:90.0px;line-height:20px;font-size:14px;color:#c9cbcd;">@</span>
<div style="left:455px;top:85px;width:3px;height:1px;background:#bbb529;"></div>
<div style="left:416px;top:617px;width:1188px;height:9px;background:rgba(255,255,255,.045);"></div>
<div style="left:421px;top:617px;width:772px;height:9px;background:rgba(128,131,133,.5);"></div>
<div style="left:1604px;top:176px;width:14px;height:3px;background:#c9a227;"></div>
<div style="left:1604px;top:253px;width:14px;height:2px;background:#857b5a;"></div>
<div style="left:1604px;top:278px;width:14px;height:2px;background:#8a5a44;"></div>
<div style="left:1604px;top:287px;width:14px;height:2px;background:#c9a227;"></div>
<div style="left:1604px;top:313px;width:14px;height:2px;background:#c9a227;"></div>
<div style="left:1604px;top:324px;width:14px;height:2px;background:#c9a227;"></div>
<div style="left:1604px;top:331px;width:14px;height:2px;background:#c9a227;"></div>
<div style="left:1604px;top:349px;width:14px;height:2px;background:#c9a227;"></div>
<div style="left:1604px;top:355px;width:14px;height:2px;background:#c9a227;"></div>
<div style="left:1604px;top:362px;width:14px;height:2px;background:#c9a227;"></div>
<div style="left:1604px;top:369px;width:14px;height:2px;background:#c9a227;"></div>
<div style="left:1604px;top:461px;width:14px;height:2px;background:#857b5a;"></div>
<div style="left:1604px;top:506px;width:14px;height:2px;background:#857b5a;"></div>
<div style="left:1604px;top:528px;width:14px;height:3px;background:#c9a227;"></div>
<div style="left:1604px;top:557px;width:14px;height:2px;background:#c9a227;"></div>
<div style="left:1604px;top:561px;width:14px;height:2px;background:#857b5a;"></div>
<div style="left:1604px;top:417px;width:14px;height:2px;background:#c77d9b;"></div>
<div style="left:1604px;top:420px;width:14px;height:2px;background:#1f7a32;"></div>
<div style="left:1604px;top:423px;width:14px;height:4px;background:#1f7a32;"></div>
<div style="left:1604px;top:430px;width:14px;height:2px;background:#1f7a32;"></div>
<div style="left:1609px;top:407px;width:8px;height:34px;background:rgba(140,140,140,.45);"></div>
<svg style="left:1481px;top:92px;" width="13" height="12" viewBox="0 0 13 12"><path d="M6.500.5L12.800 11.500H.2z" fill="#e2a93a"/><rect x="5.800" y="4" width="1.400" height="4" fill="#2b2b2b"/><rect x="5.800" y="9" width="1.400" height="1.400" fill="#2b2b2b"/></svg>
<span class="t " style="left:1496px;top:89.0px;line-height:20px;letter-spacing:-0.500px;">13</span>
<svg style="left:1518px;top:92px;" width="13" height="12" viewBox="0 0 13 12"><path d="M6.500.5L12.800 11.500H.2z" fill="#8f8565"/><rect x="5.800" y="4" width="1.400" height="4" fill="#2b2b2b"/><rect x="5.800" y="9" width="1.400" height="1.400" fill="#2b2b2b"/></svg>
<span class="t " style="left:1533px;top:89.0px;line-height:20px;">5</span>
<svg style="left:1547px;top:91px;" width="14" height="14" viewBox="0 0 14 14"><path d="M2 6l3 3.500L12 1.500" stroke="#4da04d" stroke-width="2" fill="none"/><path d="M1 12l2-1.500 2 1.500 2-1.500 2 1.500 2-1.500 2 1.500" stroke="#4da04d" stroke-width="1" fill="none"/></svg>
<span class="t " style="left:1563px;top:89.0px;line-height:20px;">5</span>
<svg style="left:1580px;top:94px;" width="10" height="8" viewBox="0 0 10 8"><path d="M1 6.500l4-4 4 4" stroke="#afb1b3" stroke-width="1.500" fill="none"/></svg>
<svg style="left:1601px;top:95px;" width="10" height="8" viewBox="0 0 10 8"><path d="M1 1.500l4 4 4-4" stroke="#afb1b3" stroke-width="1.500" fill="none"/></svg>
<svg style="left:644px;top:167px;" width="7" height="18" viewBox="0 0 7 18"><path d="M.5.5h2l1 1 1-1h2M.5 17.500h2l1-1 1 1h2M3.500 1.500v15" stroke="#d0d0d0" stroke-width="1" fill="none"/></svg>
<span class="t " style="left:1625px;top:62.0px;line-height:20px;letter-spacing:0.242px;">Maven</span>
<svg style="left:1830px;top:63px;" width="16" height="16" viewBox="0 0 16 16"><path fill="#afb1b3" fill-rule="evenodd" d="M6.44 3.46L6.54 1.67L9.46 1.67L9.56 3.46L11.15 4.38L12.75 3.57L14.22 6.10L12.71 7.08L12.71 8.92L14.22 9.90L12.75 12.43L11.15 11.62L9.56 12.54L9.46 14.33L6.54 14.33L6.44 12.54L4.85 11.62L3.25 12.43L1.78 9.90L3.29 8.92L3.29 7.08L1.78 6.10L3.25 3.57L4.85 4.38zM5.60 8a2.4 2.4 0 1 0 4.8 0a2.4 2.4 0 1 0 -4.8 0z"/><path fill="none" stroke="#afb1b3" stroke-width=".6" stroke-linejoin="round" d="M6.44 3.46L6.54 1.67L9.46 1.67L9.56 3.46L11.15 4.38L12.75 3.57L14.22 6.10L12.71 7.08L12.71 8.92L14.22 9.90L12.75 12.43L11.15 11.62L9.56 12.54L9.46 14.33L6.54 14.33L6.44 12.54L4.85 11.62L3.25 12.43L1.78 9.90L3.29 8.92L3.29 7.08L1.78 6.10L3.25 3.57L4.85 4.38z"/></svg>
<div style="left:1858px;top:70px;width:12px;height:2px;background:#afb1b3;"></div>
<div style="left:1619px;top:113px;width:258px;height:1px;background:#323232;"></div>
<svg style="left:1626px;top:91px;" width="16" height="16" viewBox="0 0 16 16"><g transform="translate(8 8) scale(0.88) translate(-8 -8)"><path d="M13.200 6.500A5.500 5.500 0 003 5.500M2.800 9.500A5.500 5.500 0 0013 10.500" stroke="#afb1b3" stroke-width="2" fill="none"/><path d="M1 2v4.500h4.500zM15 14V9.500h-4.500z" fill="#afb1b3"/></g></svg>
<svg style="left:1653px;top:91px;" width="17" height="16" viewBox="0 0 17 16"><path d="M0 1h5l1.500 2H13v5.500H8.500V12H0z" fill="#afb1b3"/><path d="M15.500 10a3.200 3.200 0 00-5.800-.8M9.500 12a3.200 3.200 0 005.800.8" stroke="#afb1b3" stroke-width="1.300" fill="none"/><path d="M8.500 7v3h3zM16.500 15v-3h-3z" fill="#afb1b3"/></svg>
<svg style="left:1680px;top:91px;" width="16" height="16" viewBox="0 0 16 16"><path d="M6.500 0v7" stroke="#afb1b3" stroke-width="2.200"/><path d="M2.800 5h7.400L6.500 9z" fill="#afb1b3"/><path d="M0 11.500h11.500" stroke="#afb1b3" stroke-width="2"/><path d="M8.500 12.500h6l-3 3z" fill="#afb1b3"/></svg>
<div style="left:1702px;top:89px;width:1px;height:20px;background:#515456;"></div>
<svg style="left:1712px;top:92px;" width="14" height="14" viewBox="0 0 14 14"><path d="M7 2v10M2 7h10" stroke="#afb1b3" stroke-width="2"/></svg>
<div style="left:1735px;top:89px;width:1px;height:20px;background:#515456;"></div>
<svg style="left:1747px;top:92px;" width="12" height="14" viewBox="0 0 12 14"><path d="M1 1l10 6-10 6z" fill="#5e6163"/></svg>
<svg style="left:1769px;top:91px;" width="19" height="16" viewBox="0 0 19 16"><text x="0.500" y="13" font-family="Liberation Sans,sans-serif" font-style="italic" font-weight="bold" font-size="18" fill="#afb1b3" stroke="#afb1b3" stroke-width=".5">m</text></svg>
<svg style="left:1796px;top:91px;" width="17" height="17" viewBox="0 0 17 17"><rect x="1" y="7" width="5.800" height="2.800" fill="#afb1b3"/><rect x="10.200" y="7" width="5.800" height="2.800" fill="#afb1b3"/><path d="M4 15L9.300 1.300M7.800 15L13 1.300" stroke="#afb1b3" stroke-width="1.500"/></svg>
<div style="left:1819px;top:88px;width:22px;height:22px;background:#5c6164;border-radius:3px;"></div>
<svg style="left:1822px;top:91px;" width="16" height="16" viewBox="0 0 16 16"><circle cx="8" cy="8" r="7" fill="#3592c4"/><path d="M9.500 3L5 8.800h3L6.500 13 11 7.200H8z" fill="#2b2b2b"/></svg>
<span class="t " style="left:1864px;top:88.0px;line-height:20px;font-size:13px;color:#8a8d8f;">»</span>
<svg style="left:1627.2px;top:118.5px;" width="7" height="10" viewBox="0 0 7 10"><path d="M1 1l4.300 4L1 9" stroke="#afb1b3" stroke-width="1.300" fill="none"/></svg>
<svg style="left:1646px;top:117px;" width="14" height="16" viewBox="0 0 14 16"><path d="M0 3.800L3.900 0v3.800z" fill="#aab5bd"/><path d="M4.400 0h5.700v8.200H2.900v5.900H0V5h4.400z" fill="#8d9ba6"/><text x="3.300" y="15" font-family="Liberation Sans,sans-serif" font-style="italic" font-weight="bold" font-size="11" fill="#40b6e0" stroke="#0d293e" stroke-width="2" paint-order="stroke">m</text></svg>
<span class="t mv" style="left:1662px;top:114px;line-height:20px;"><span style="letter-spacing:-0.250px">ELADMIN</span> <i>后台管理</i> <em>(root)</em></span>
<svg style="left:1627.2px;top:138.5px;" width="7" height="10" viewBox="0 0 7 10"><path d="M1 1l4.300 4L1 9" stroke="#afb1b3" stroke-width="1.300" fill="none"/></svg>
<svg style="left:1646px;top:137px;" width="14" height="16" viewBox="0 0 14 16"><path d="M0 3.800L3.900 0v3.800z" fill="#aab5bd"/><path d="M4.400 0h5.700v8.200H2.900v5.900H0V5h4.400z" fill="#8d9ba6"/><text x="3.300" y="15" font-family="Liberation Sans,sans-serif" font-style="italic" font-weight="bold" font-size="11" fill="#40b6e0" stroke="#3c3f41" stroke-width="2" paint-order="stroke">m</text></svg>
<span class="t mv" style="left:1662px;top:134px;line-height:20px;"><i>代码生成模块</i></span>
<svg style="left:1627.2px;top:158.5px;" width="7" height="10" viewBox="0 0 7 10"><path d="M1 1l4.300 4L1 9" stroke="#afb1b3" stroke-width="1.300" fill="none"/></svg>
<svg style="left:1646px;top:157px;" width="14" height="16" viewBox="0 0 14 16"><path d="M0 3.800L3.900 0v3.800z" fill="#aab5bd"/><path d="M4.400 0h5.700v8.200H2.900v5.900H0V5h4.400z" fill="#8d9ba6"/><text x="3.300" y="15" font-family="Liberation Sans,sans-serif" font-style="italic" font-weight="bold" font-size="11" fill="#40b6e0" stroke="#3c3f41" stroke-width="2" paint-order="stroke">m</text></svg>
<span class="t mv" style="left:1662px;top:154px;line-height:20px;"><i>公共模块</i></span>
<svg style="left:1627.2px;top:178.5px;" width="7" height="10" viewBox="0 0 7 10"><path d="M1 1l4.300 4L1 9" stroke="#afb1b3" stroke-width="1.300" fill="none"/></svg>
<svg style="left:1646px;top:177px;" width="14" height="16" viewBox="0 0 14 16"><path d="M0 3.800L3.900 0v3.800z" fill="#aab5bd"/><path d="M4.400 0h5.700v8.200H2.900v5.900H0V5h4.400z" fill="#8d9ba6"/><text x="3.300" y="15" font-family="Liberation Sans,sans-serif" font-style="italic" font-weight="bold" font-size="11" fill="#40b6e0" stroke="#3c3f41" stroke-width="2" paint-order="stroke">m</text></svg>
<span class="t mv" style="left:1662px;top:174px;line-height:20px;"><i>工具模块</i></span>
<svg style="left:1627.2px;top:198.5px;" width="7" height="10" viewBox="0 0 7 10"><path d="M1 1l4.300 4L1 9" stroke="#afb1b3" stroke-width="1.300" fill="none"/></svg>
<svg style="left:1646px;top:197px;" width="14" height="16" viewBox="0 0 14 16"><path d="M0 3.800L3.900 0v3.800z" fill="#aab5bd"/><path d="M4.400 0h5.700v8.200H2.900v5.900H0V5h4.400z" fill="#8d9ba6"/><text x="3.300" y="15" font-family="Liberation Sans,sans-serif" font-style="italic" font-weight="bold" font-size="11" fill="#40b6e0" stroke="#3c3f41" stroke-width="2" paint-order="stroke">m</text></svg>
<span class="t mv" style="left:1662px;top:194px;line-height:20px;"><i>日志模块</i></span>
<svg style="left:1627.2px;top:218.5px;" width="7" height="10" viewBox="0 0 7 10"><path d="M1 1l4.300 4L1 9" stroke="#afb1b3" stroke-width="1.300" fill="none"/></svg>
<svg style="left:1646px;top:217px;" width="14" height="16" viewBox="0 0 14 16"><path d="M0 3.800L3.900 0v3.800z" fill="#aab5bd"/><path d="M4.400 0h5.700v8.200H2.900v5.900H0V5h4.400z" fill="#8d9ba6"/><text x="3.300" y="15" font-family="Liberation Sans,sans-serif" font-style="italic" font-weight="bold" font-size="11" fill="#40b6e0" stroke="#3c3f41" stroke-width="2" paint-order="stroke">m</text></svg>
<span class="t mv" style="left:1662px;top:214px;line-height:20px;"><i>核心模块</i></span>
<span class="t " style="left:28px;top:631.0px;line-height:20px;letter-spacing:-0.319px;">Eval Reset</span>
<svg style="left:1830px;top:632px;" width="16" height="16" viewBox="0 0 16 16"><path fill="#afb1b3" fill-rule="evenodd" d="M6.44 3.46L6.54 1.67L9.46 1.67L9.56 3.46L11.15 4.38L12.75 3.57L14.22 6.10L12.71 7.08L12.71 8.92L14.22 9.90L12.75 12.43L11.15 11.62L9.56 12.54L9.46 14.33L6.54 14.33L6.44 12.54L4.85 11.62L3.25 12.43L1.78 9.90L3.29 8.92L3.29 7.08L1.78 6.10L3.25 3.57L4.85 4.38zM5.60 8a2.4 2.4 0 1 0 4.8 0a2.4 2.4 0 1 0 -4.8 0z"/><path fill="none" stroke="#afb1b3" stroke-width=".6" stroke-linejoin="round" d="M6.44 3.46L6.54 1.67L9.46 1.67L9.56 3.46L11.15 4.38L12.75 3.57L14.22 6.10L12.71 7.08L12.71 8.92L14.22 9.90L12.75 12.43L11.15 11.62L9.56 12.54L9.46 14.33L6.54 14.33L6.44 12.54L4.85 11.62L3.25 12.43L1.78 9.90L3.29 8.92L3.29 7.08L1.78 6.10L3.25 3.57L4.85 4.38z"/></svg>
<div style="left:1858px;top:639px;width:12px;height:2px;background:#afb1b3;"></div>
<span class="t b" style="left:27px;top:658.0px;line-height:20px;letter-spacing:-0.120px;">Last Reset Time:</span>
<span class="t " style="left:141px;top:658.0px;line-height:20px;letter-spacing:-0.095px;">2025-02-05 08:52:44</span>
<span class="t b" style="left:27px;top:685.0px;line-height:20px;letter-spacing:-0.009px;">Found:</span>
<div style="left:27px;top:713px;width:1843px;height:195px;border:1px solid #6d7a89;background:#3c3f41;"></div>
<span class="t " style="left:29px;top:716.0px;line-height:20px;letter-spacing:-0.893px;">LICENSE:</span>
<span class="t " style="left:85px;top:716.0px;line-height:20px;letter-spacing:-0.052px;">idea212.evaluation.key,</span>
<span class="t " style="left:223px;top:716.0px;line-height:20px;letter-spacing:-0.134px;">UNTIL:</span>
<span class="t " style="left:266.3px;top:716.0px;line-height:20px;letter-spacing:-0.112px;">2025-03-07 08:52:44</span>
<span class="t " style="left:29px;top:736.0px;line-height:20px;letter-spacing:-1.061px;">PROPERTY:</span>
<span class="t " style="left:97.5px;top:736.0px;line-height:20px;letter-spacing:0.062px;">evlsprt3.212 = 18</span>
<span class="t " style="left:29px;top:756.0px;line-height:20px;letter-spacing:-1.200px;">PREFERENCE:</span>
<span class="t " style="left:111.2px;top:756.0px;line-height:20px;letter-spacing:-0.074px;">JetBrains.UserIdOnMachine</span>
<span class="t " style="left:275.5px;top:756.0px;line-height:20px;">=</span>
<span class="t " style="left:288.3px;top:756.0px;line-height:20px;letter-spacing:0.040px;">3f9b86c8-ac94-4a00-8ad6-6bf05d322116</span>
<span class="t " style="left:29px;top:776.0px;line-height:20px;letter-spacing:-1.200px;">PREFERENCE:</span>
<span class="t " style="left:111.2px;top:776.0px;line-height:20px;letter-spacing:-0.220px;">jetbrains.user_id_on_machine</span>
<span class="t " style="left:282.5px;top:776.0px;line-height:20px;">=</span>
<span class="t " style="left:295.5px;top:776.0px;line-height:20px;letter-spacing:0.040px;">3f9b86c8-ac94-4a00-8ad6-6bf05d322116</span>
<span class="t " style="left:29px;top:796.0px;line-height:20px;letter-spacing:-1.200px;">PREFERENCE:</span>
<span class="t " style="left:111.2px;top:796.0px;line-height:20px;letter-spacing:-0.094px;">jetbrains.device_id</span>
<span class="t " style="left:221.5px;top:796.0px;line-height:20px;">=</span>
<span class="t " style="left:234px;top:796.0px;line-height:20px;letter-spacing:0.097px;">0502251bdc0f07f-d3fb-4fb7-89bc-2dc951b83176</span>
<span class="t " style="left:29px;top:816.0px;line-height:20px;letter-spacing:-1.200px;">PREFERENCE:</span>
<span class="t " style="left:111.2px;top:816.0px;line-height:20px;letter-spacing:-0.065px;">jetbrains.idea.c300f482.evlsprt3.212</span>
<span class="t " style="left:321.7px;top:816.0px;line-height:20px;letter-spacing:0.525px;">= -19</span>
<span class="t " style="left:29px;top:836.0px;line-height:20px;letter-spacing:-0.920px;">FILE:</span>
<span class="t " style="left:59.6px;top:836.0px;line-height:20px;letter-spacing:-0.056px;">PermanentUserId</span>
<span class="t " style="left:29px;top:856.0px;line-height:20px;letter-spacing:-0.920px;">FILE:</span>
<span class="t " style="left:59.6px;top:856.0px;line-height:20px;letter-spacing:-0.129px;">PermanentDeviceId</span>
<span class="t " style="left:27px;top:926.0px;line-height:20px;letter-spacing:-0.284px;color:#7d8082;">v2.1.6</span>
<div style="left:1492px;top:928px;width:12px;height:12px;border:1px solid #6b6b6b;background:#43494a;border-radius:1px;"></div>
<span class="t " style="left:1512px;top:926.0px;line-height:20px;letter-spacing:0.265px;">Auto reset before per restart</span>
<div style="left:1689px;top:923px;width:87px;height:22px;border:1px solid #5e6060;background:#4c5052;border-radius:3px;"></div>
<svg style="left:1703px;top:927px;" width="16" height="16" viewBox="0 0 16 16"><g transform="translate(8 8) scale(0.9) translate(-8 -8)"><path d="M13.200 6.500A5.500 5.500 0 003 5.500M2.800 9.500A5.500 5.500 0 0013 10.500" stroke="#afb1b3" stroke-width="2" fill="none"/><path d="M1 2v4.500h4.500zM15 14V9.500h-4.500z" fill="#afb1b3"/></g></svg>
<span class="t " style="left:1723px;top:926.0px;line-height:20px;letter-spacing:0.159px;">Reload</span>
<div style="left:1789px;top:923px;width:78px;height:22px;border:1px solid #5e6060;background:#4c5052;border-radius:3px;"></div>
<svg style="left:1805px;top:928px;" width="14" height="14" viewBox="0 0 14 14"><path d="M3 4.500h5.500a3.800 3.800 0 010 7.600H4" stroke="#afb1b3" stroke-width="1.700" fill="none"/><path d="M0 4.500L4.500.8v7.400z" fill="#afb1b3"/></svg>
<span class="t " style="left:1823px;top:926.0px;line-height:20px;letter-spacing:0.008px;">Reset</span>
<div style="left:1860.500px;top:757.0px;width:70px;height:45px;border-radius:22.500px;background:#121314;box-shadow:0 0 1.500px 0.500px rgba(18,19,20,.8);"></div>
<div style="left:1866.1px;top:762.1px;width:34.800px;height:34.800px;border-radius:17.400px;background:#ffffff;"></div>
<div style="left:1860.500px;top:831.5px;width:70px;height:45px;border-radius:22.500px;background:#121314;box-shadow:0 0 1.500px 0.500px rgba(18,19,20,.8);"></div>
<div style="left:1866.1px;top:836.6px;width:34.800px;height:34.800px;border-radius:17.400px;background:#ffffff;"></div>
<svg style="left:1864px;top:762px;" width="35" height="36" viewBox="0 0 35 36"><path d="M11.200 11q0-.9.900-.9h6.600l1.300 2h6.700q.9 0 .9.900v2.300H13.200v7.700l-2 2.800z" fill="#40c057"/><path d="M14.400 17.100h14.400l-2.300 8.200q-.2.500-.8.500H11.200z" fill="#40c057"/></svg>
<svg style="left:1864px;top:836px;" width="35" height="36" viewBox="0 0 35 36"><path d="M12.600 11H31L21.600 27l-1.200-5.400 3.600-6.100-7.600-.7z" fill="#14c76a"/><path d="M10.500 16.400l10.400.5-4.700 9.400 1.800-7.600z" fill="#14c76a"/></svg>
<div style="left:18px;top:627px;width:516px;height:273px;border:4px solid #e8202a;"></div>
<div style="left:302px;top:956px;width:94px;height:22px;background:#2d2f30;"></div>
<span class="t " style="left:48px;top:958.0px;line-height:20px;letter-spacing:-0.312px;">Git</span>
<span class="t " style="left:99px;top:958.0px;line-height:20px;letter-spacing:-1.200px;">TODO</span>
<span class="t " style="left:168px;top:958.0px;line-height:20px;letter-spacing:-0.703px;">Problems</span>
<span class="t " style="left:255px;top:958.0px;line-height:20px;letter-spacing:-0.312px;">Profiler</span>
<span class="t " style="left:333px;top:958.0px;line-height:20px;letter-spacing:-1.097px;color:#e8e8e8;">Eval Reset</span>
<span class="t " style="left:424px;top:958.0px;line-height:20px;letter-spacing:-0.446px;">Terminal</span>
<span class="t " style="left:507px;top:958.0px;line-height:20px;letter-spacing:-0.479px;">Endpoints</span>
<span class="t " style="left:598px;top:958.0px;line-height:20px;letter-spacing:-0.230px;">Build</span>
<span class="t " style="left:664px;top:958.0px;line-height:20px;letter-spacing:-0.739px;">Dependencies</span>
<span class="t " style="left:777px;top:958.0px;line-height:20px;letter-spacing:-0.516px;">Spring</span>
<span class="t " style="left:849px;top:958.0px;line-height:20px;letter-spacing:0.050px;">Auto-build</span>
<svg style="left:32.5px;top:961.5px;" width="10" height="13" viewBox="0 0 10 13"><circle cx="2.300" cy="2.300" r="2.100" fill="#afb1b3"/><circle cx="2.300" cy="10.500" r="2.100" fill="#afb1b3"/><circle cx="7.700" cy="3.300" r="2.100" fill="#afb1b3"/><path d="M2.300 2v8.500M7.700 3.500v1.800c0 2.700-5.400 1.500-5.400 4.500" stroke="#afb1b3" stroke-width="1.900" fill="none"/></svg>
<svg style="left:84px;top:963px;" width="11" height="10" viewBox="0 0 11 10"><path d="M0 1.500h2M0 5h2M0 8.500h2M3.500 1.500H11M3.500 5H11M3.500 8.500H11" stroke="#afb1b3" stroke-width="1.800"/></svg>
<svg style="left:151px;top:962px;" width="12" height="12" viewBox="0 0 12 12"><circle cx="6" cy="6" r="5.500" fill="#afb1b3"/><rect x="5.200" y="2.500" width="1.600" height="4.500" fill="#3c3f41"/><rect x="5.200" y="8" width="1.600" height="1.600" fill="#3c3f41"/></svg>
<svg style="left:237px;top:961px;" width="14" height="13" viewBox="0 0 14 13"><path d="M6 1a5 5 0 105 5" stroke="#afb1b3" stroke-width="1.500" fill="none"/><path d="M6 1v5h5a5 5 0 00-5-5z" fill="#afb1b3" opacity=".55"/><path d="M8 6l6 3.500-6 3.500z" fill="#afb1b3"/></svg>
<svg style="left:315px;top:961px;" width="14" height="14" viewBox="0 0 14 14"><path d="M3 4.500h5.500a3.800 3.800 0 010 7.600H4" stroke="#e0e0e0" stroke-width="1.700" fill="none"/><path d="M0 4.500L4.500.8v7.400z" fill="#e0e0e0"/></svg>
<svg style="left:408px;top:962px;" width="12" height="11" viewBox="0 0 12 11"><rect x="0" y="0" width="12" height="11" rx="1" fill="#afb1b3"/><path d="M2.500 3l2.500 2.500L2.500 8M6.500 8.500h3" stroke="#3c3f41" stroke-width="1.200" fill="none"/></svg>
<svg style="left:490px;top:961px;" width="13" height="13" viewBox="0 0 13 13"><circle cx="2.500" cy="10.500" r="2.300" fill="#afb1b3"/><circle cx="6.500" cy="2.500" r="2.300" fill="#afb1b3"/><circle cx="10.500" cy="10.500" r="2.300" fill="#afb1b3"/><path d="M2.500 10.500l4-8 4 8" stroke="#afb1b3" stroke-width="1.300" fill="none"/></svg>
<svg style="left:580px;top:961px;" width="14" height="13" viewBox="0 0 14 13"><path d="M1.500 3.500L5 0l4 3-1 1.500 5.500 6-1.500 1.500L6.500 6 5 7z" fill="#afb1b3"/></svg>
<svg style="left:647px;top:961px;" width="13" height="13" viewBox="0 0 13 13"><path d="M6.500 0L13 3 6.500 6 0 3z" fill="#afb1b3"/><path d="M1.500 5.500L0 6.200l6.500 3 6.500-3-1.500-.7-5 2.300zM1.500 8.700L0 9.400l6.500 3 6.500-3-1.500-.7-5 2.300z" fill="#afb1b3"/></svg>
<svg style="left:759px;top:961px;" width="14" height="12" viewBox="0 0 14 12"><path d="M13 0c.5 5.500-2 10.500-7.500 10.500-2 0-3.500-.7-5-2C4 8.500 9 7.500 11 3 8.500 6.500 4 7 1 7 1.500 2.500 7 3 13 0z" fill="#afb1b3"/></svg>
<svg style="left:831px;top:961px;" width="13" height="12" viewBox="0 0 13 12"><path d="M6.500.5L12.800 11.500H.2z" fill="#f0a732"/><rect x="5.800" y="4" width="1.400" height="4" fill="#3c3f41"/><rect x="5.800" y="9" width="1.400" height="1.400" fill="#3c3f41"/></svg>
<svg style="left:1797px;top:962px;" width="13" height="13" viewBox="0 0 13 13"><path d="M6.500 1a5.500 5.500 0 100 11H12V6.500A5.500 5.500 0 006.500 1z" stroke="#afb1b3" stroke-width="1.400" fill="none"/></svg>
<span class="t " style="left:1814px;top:958.0px;line-height:20px;letter-spacing:-0.693px;">Event Log</span>
<svg style="left:6px;top:983px;" width="12" height="12" viewBox="0 0 12 12"><rect x="2.500" y=".5" width="9" height="9" fill="none" stroke="#afb1b3"/><path d="M.5 2.500v9h9" fill="none" stroke="#afb1b3"/></svg>
<span class="t " style="left:27px;top:979.0px;line-height:20px;letter-spacing:0.214px;">Auto build completed with errors (a minute ago)</span>
<span class="t " style="left:1620px;top:979.0px;line-height:20px;letter-spacing:-0.153px;">244:24</span>
<span class="t " style="left:1670px;top:979.0px;line-height:20px;letter-spacing:-1.200px;">CRLF</span>
<span class="t " style="left:1710px;top:979.0px;line-height:20px;letter-spacing:-0.461px;">UTF-8</span>
<span class="t " style="left:1756px;top:979.0px;line-height:20px;letter-spacing:-0.007px;">4 spaces</span>
<svg style="left:1820px;top:982px;" width="11" height="14" viewBox="0 0 11 14"><circle cx="2.500" cy="2.300" r="2" fill="#afb1b3"/><circle cx="8.500" cy="3.300" r="2" fill="#afb1b3"/><path d="M2.500 2v12M8.500 3.500c0 4-6 2.500-6 6.500" stroke="#afb1b3" stroke-width="1.900" fill="none"/></svg>
<span class="t " style="left:1836px;top:979.0px;line-height:20px;letter-spacing:0.271px;">main</span>
<svg style="left:1874px;top:982px;" width="12" height="13" viewBox="0 0 12 13"><path d="M1.500 6V3.500a2.500 2.500 0 015 0V5" stroke="#afb1b3" stroke-width="1.500" fill="none"/><rect x="4" y="6" width="8" height="7" fill="#afb1b3"/></svg>
<svg style="left:1328px;top:36px;" width="16" height="13" viewBox="0 0 16 13"><circle cx="10.500" cy="3.500" r="3" fill="#7f8284"/><path d="M6 12c0-3.500 2-5 4.500-5s4.500 1.500 4.500 5z" fill="#7f8284"/><circle cx="6" cy="4" r="3.300" fill="#afb1b3"/><path d="M0 13c0-4 2.500-5.500 6-5.500s6 1.500 6 5.500z" fill="#afb1b3"/></svg>
<svg style="left:1346px;top:42px;" width="9" height="5" viewBox="0 0 9 5"><path d="M0 0h8L4 4.500z" fill="#afb1b3"/></svg>
<div style="left:1362px;top:33px;width:1px;height:20px;background:#515456;"></div>
<svg style="left:1371px;top:36px;" width="16" height="14" viewBox="0 0 16 14"><path d="M6 5l8.500 8" stroke="#499c54" stroke-width="2.600"/><path d="M1.500 6.500L7.500 1.500" stroke="#499c54" stroke-width="4.200"/></svg>
<div style="left:1398px;top:32px;width:99px;height:20px;border:1px solid #646769;border-radius:3px;"></div>
<svg style="left:1407px;top:35px;" width="17" height="17" viewBox="0 0 17 17"><path d="M14.200 2c1.500 4 .5 8-2.500 10.500-3 2.500-8 2.200-11 0 .5-5 3-7 7-7.700 3-.5 5-1 6.500-2.800z" fill="#5fad4e"/><polygon points="16.30,11.80 13.90,15.96 9.10,15.96 6.70,11.80 9.10,7.64 13.90,7.64" fill="#aeb9c0" stroke="#3c3f41" stroke-width="1"/><circle cx="11.5" cy="12.0" r="2.300" fill="none" stroke="#3c3f41" stroke-width="1"/><path d="M11.5 8.8v3" stroke="#aeb9c0" stroke-width="2.400"/><path d="M11.5 9.0v2.800" stroke="#3c3f41" stroke-width="1"/></svg>
<span class="t " style="left:1427px;top:34.0px;line-height:20px;letter-spacing:0.003px;">AppRun</span>
<svg style="left:1481px;top:41px;" width="9" height="5" viewBox="0 0 9 5"><path d="M0 0h8L4 4.500z" fill="#afb1b3"/></svg>
<svg style="left:1512.5px;top:36.5px;" width="11" height="13" viewBox="0 0 11 13"><path d="M0 0l10.500 6.400L0 12.800z" fill="#499c54"/></svg>
<svg style="left:1536.5px;top:35.5px;" width="13" height="15" viewBox="0 0 13 15"><path d="M3.200 .5l2 2.600M9.800 .5l-2 2.600" stroke="#499c54" stroke-width="1.400"/><path d="M.5 5.900h12M.5 9.200h12M.5 12.400h12" stroke="#499c54" stroke-width="1.500"/><rect x="2.100" y="2.700" width="8.800" height="11.600" rx="4.200" ry="4.400" fill="#499c54"/><path d="M4 7.300h5M4 10.800h5" stroke="#3c3f41" stroke-width="1.300"/></svg>
<svg style="left:1561.5px;top:36.5px;" width="16" height="15" viewBox="0 0 16 15"><path d="M.6 1.800Q3 .3 5.500 .6 8.500 .3 10.700 1.800V6.500Q10.500 10.500 5.600 12.600 .8 10.500.6 6.500z" fill="#c4c6c8"/><path d="M5.600 2h3.800v5.500L5.600 11z" fill="#3c3f41"/><path d="M8.300 5.700l7.300 4.300-7.300 4.400z" fill="#499c54" stroke="#3c3f41" stroke-width=".7"/></svg>
<svg style="left:1585.5px;top:36px;" width="17" height="16" viewBox="0 0 17 16"><circle cx="6.500" cy="6.200" r="5.400" fill="none" stroke="#5e6163" stroke-width="1.300"/><path d="M7.200 3.200L6.300 6.800" stroke="#5e6163" stroke-width="1.100" fill="none"/><path d="M8.300 6.500l7.300 4.200-7.300 4.400z" fill="#5e6163" stroke="#3c3f41" stroke-width=".9"/></svg>
<svg style="left:1608px;top:42px;" width="9" height="5" viewBox="0 0 9 5"><path d="M0 0h8L4 4.500z" fill="#afb1b3"/></svg>
<div style="left:1627px;top:38px;width:10px;height:10px;background:#5e6163;"></div>
<div style="left:1648px;top:33px;width:1px;height:20px;background:#515456;"></div>
<span class="t " style="left:1658px;top:34.0px;line-height:20px;letter-spacing:-0.078px;">Git:</span>
<svg style="left:1689px;top:37px;" width="12" height="12" viewBox="0 0 12 12"><path d="M11 1L2 10" stroke="#3592c4" stroke-width="2"/><path d="M1 3.500V11h7.500" stroke="#3592c4" stroke-width="2" fill="none"/></svg>
<svg style="left:1715px;top:37px;" width="14" height="12" viewBox="0 0 14 12"><path d="M1 6l4 4.500L13 1.500" stroke="#499c54" stroke-width="2.200" fill="none"/></svg>
<svg style="left:1741px;top:37px;" width="12" height="12" viewBox="0 0 12 12"><path d="M1 11L10 2" stroke="#499c54" stroke-width="2"/><path d="M3.500 1H11v7.500" stroke="#499c54" stroke-width="2" fill="none"/></svg>
<svg style="left:1765px;top:35px;" width="16" height="16" viewBox="0 0 16 16"><circle cx="8" cy="8" r="6.300" fill="none" stroke="#afb1b3" stroke-width="1.600"/><path d="M8 4v4.300l2.800 1.700" stroke="#afb1b3" stroke-width="1.500" fill="none"/></svg>
<svg style="left:1793px;top:36px;" width="14" height="14" viewBox="0 0 14 14"><path d="M3 4.500h5.500a3.800 3.800 0 010 7.600H4" stroke="#5e6163" stroke-width="1.700" fill="none"/><path d="M0 4.500L4.500.8v7.400z" fill="#5e6163"/></svg>
<div style="left:1815px;top:33px;width:1px;height:20px;background:#515456;"></div>
<svg style="left:1825px;top:36px;" width="15" height="15" viewBox="0 0 15 15"><circle cx="6" cy="6" r="4.700" fill="none" stroke="#afb1b3" stroke-width="1.800"/><path d="M9.500 9.500l4.500 4.500" stroke="#afb1b3" stroke-width="2.200"/></svg>
<svg style="left:1850px;top:35px;" width="16" height="16" viewBox="0 0 16 16"><path fill="#afb1b3" fill-rule="evenodd" d="M6.44 3.46L6.54 1.67L9.46 1.67L9.56 3.46L11.15 4.38L12.75 3.57L14.22 6.10L12.71 7.08L12.71 8.92L14.22 9.90L12.75 12.43L11.15 11.62L9.56 12.54L9.46 14.33L6.54 14.33L6.44 12.54L4.85 11.62L3.25 12.43L1.78 9.90L3.29 8.92L3.29 7.08L1.78 6.10L3.25 3.57L4.85 4.38zM5.60 8a2.4 2.4 0 1 0 4.8 0a2.4 2.4 0 1 0 -4.8 0z"/><path fill="none" stroke="#afb1b3" stroke-width=".6" stroke-linejoin="round" d="M6.44 3.46L6.54 1.67L9.46 1.67L9.56 3.46L11.15 4.38L12.75 3.57L14.22 6.10L12.71 7.08L12.71 8.92L14.22 9.90L12.75 12.43L11.15 11.62L9.56 12.54L9.46 14.33L6.54 14.33L6.44 12.54L4.85 11.62L3.25 12.43L1.78 9.90L3.29 8.92L3.29 7.08L1.78 6.10L3.25 3.57L4.85 4.38z"/></svg>
<svg style="left:1877px;top:36px;" width="15" height="15" viewBox="0 0 15 15"><defs><linearGradient id="lg1" x1="0" y1="0" x2="1" y2="1"><stop offset="0" stop-color="#f5e625"/><stop offset=".45" stop-color="#21d789"/><stop offset="1" stop-color="#087cfa"/></linearGradient></defs><path d="M2 0C1 5 1 10 3 15c5-1 9.500-4 12-8C12 3 7 0 2 0z" fill="url(#lg1)"/><path d="M8 4l7 3.500-5 4z" fill="#1e5fd8" opacity=".7"/></svg>
</div>
</body></html>
